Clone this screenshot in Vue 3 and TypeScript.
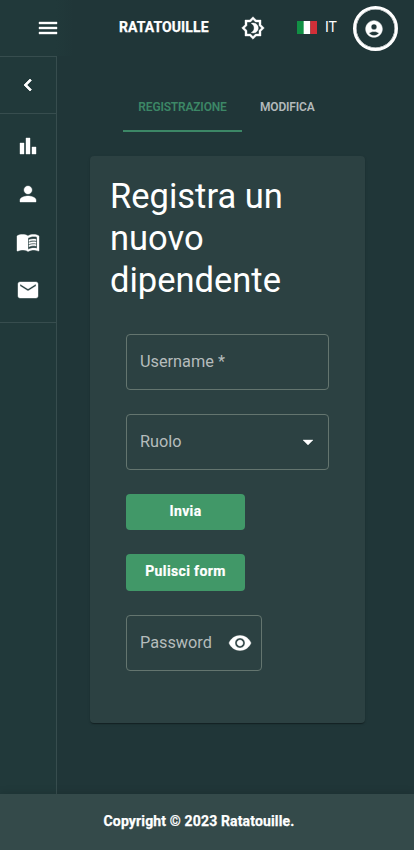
<script setup lang="ts">
import { ref } from 'vue'

interface NavItem {
  name: string
  path: string
}

const navItems: NavItem[] = [
  { name: 'Statistiche', path: 'M4 9h4v11H4zm12 4h4v7h-4zm-6-9h4v16h-4z' },
  { name: 'Utenti', path: 'M12 12c2.21 0 4-1.79 4-4s-1.79-4-4-4-4 1.79-4 4 1.79 4 4 4zm0 2c-2.67 0-8 1.34-8 4v2h16v-2c0-2.66-5.33-4-8-4z' },
  { name: 'Menu', path: 'M21 5c-1.11-.35-2.33-.5-3.5-.5-1.95 0-4.05.4-5.5 1.5-1.45-1.1-3.55-1.5-5.5-1.5S2.45 4.9 1 6v14.65c0 .25.25.5.5.5.1 0 .15-.05.25-.05C3.1 20.45 5.05 20 6.5 20c1.95 0 4.05.4 5.5 1.5 1.35-.85 3.8-1.5 5.5-1.5 1.65 0 3.35.3 4.75 1.05.1.05.15.05.25.05.25 0 .5-.25.5-.5V6c-.6-.45-1.25-.75-2-1zm0 13.5c-1.1-.35-2.3-.5-3.5-.5-1.7 0-4.15.65-5.5 1.5V8c1.35-.85 3.8-1.5 5.5-1.5 1.2 0 2.4.15 3.5.5v11.5zM17.5 10.5c.88 0 1.73.09 2.5.26V9.24c-.79-.15-1.64-.24-2.5-.24-1.7 0-3.24.29-4.5.83v1.66c1.13-.64 2.7-.99 4.5-.99zM13 12.49v1.66c1.13-.64 2.7-.99 4.5-.99.88 0 1.73.09 2.5.26V11.9c-.79-.15-1.64-.24-2.5-.24-1.7 0-3.24.3-4.5.83zM17.5 14.33c-1.7 0-3.24.29-4.5.83v1.66c1.13-.64 2.7-.99 4.5-.99.88 0 1.73.09 2.5.26v-1.52c-.79-.16-1.64-.24-2.5-.24z' },
  { name: 'Messaggi', path: 'M20 4H4c-1.1 0-1.99.9-1.99 2L2 18c0 1.1.9 2 2 2h16c1.1 0 2-.9 2-2V6c0-1.1-.9-2-2-2zm0 4l-8 5-8-5V6l8 5 8-5v2z' },
]

const tabs: string[] = ['Registrazione', 'Modifica']
const activeTab = ref(0)
</script>

<template>
  <div class="page">
    <header class="topbar">
      <button class="plain menu">
        <svg class="icon" viewBox="0 0 24 24"><path d="M3 18h18v-2H3v2zm0-5h18v-2H3v2zm0-7v2h18V6H3z" /></svg>
      </button>
      <span class="brand">RATATOUILLE</span>
      <button class="plain theme">
        <svg class="icon" viewBox="0 0 24 24"><path d="M20 8.69V4h-4.69L12 .69 8.69 4H4v4.69L.69 12 4 15.31V20h4.69L12 23.31 15.31 20H20v-4.69L23.31 12 20 8.69zm-2 5.79V18h-3.52L12 20.48 9.52 18H6v-3.52L3.52 12 6 9.52V6h3.52L12 3.52 14.48 6H18v3.52L20.48 12 18 14.48zM12.29 7c-.74 0-1.45.17-2.08.46 1.72.79 2.92 2.53 2.92 4.54s-1.2 3.75-2.92 4.54c.63.29 1.34.46 2.08.46 2.76 0 5-2.24 5-5s-2.24-5-5-5z" /></svg>
      </button>
      <div class="lang">
        <svg class="flag" viewBox="0 0 20 13"><path fill="#119044" d="M0 0h7v13H0z" /><path fill="#fff" d="M6.67 0h6.66v13H6.67z" /><path fill="#d22f38" d="M13.33 0H20v13h-6.67z" /></svg>
        <span>IT</span>
      </div>
      <button class="plain avatar">
        <svg viewBox="0 0 24 24"><path d="M12 2C6.48 2 2 6.48 2 12s4.48 10 10 10 10-4.48 10-10S17.52 2 12 2zm0 4c1.93 0 3.5 1.57 3.5 3.5S13.93 13 12 13s-3.5-1.57-3.5-3.5S10.07 6 12 6zm0 14c-2.03 0-4.43-.82-6.14-2.88C7.55 15.8 9.68 15 12 15s4.45.8 6.14 2.12C16.43 19.18 14.03 20 12 20z" /></svg>
      </button>
    </header>

    <div class="body">
      <aside class="sidebar">
        <div class="collapse">
          <svg class="icon" viewBox="0 0 24 24"><path d="M15.41 7.41L14 6l-6 6 6 6 1.41-1.41L10.83 12z" /></svg>
        </div>
        <nav class="nav">
          <a v-for="item in navItems" :key="item.name" class="nav-item">
            <svg class="icon" viewBox="0 0 24 24"><path :d="item.path" /></svg>
          </a>
        </nav>
      </aside>

      <main class="content">
        <div class="tabs">
          <button
            v-for="(tab, i) in tabs"
            :key="tab"
            class="plain tab"
            :class="{ active: activeTab === i }"
            @click="activeTab = i"
          >{{ tab }}</button>
        </div>
        <section class="card">
          <h1 class="title">Registra un nuovo dipendente</h1>
          <div class="form">
            <div class="field"><span>Username *</span></div>
            <div class="field">
              <span>Ruolo</span>
              <svg class="icon arrow" viewBox="0 0 24 24"><path d="M7 10l5 5 5-5z" /></svg>
            </div>
            <button class="plain action">Invia</button>
            <button class="plain action clear">Pulisci form</button>
            <div class="field password">
              <span>Password</span>
              <svg class="icon" viewBox="0 0 24 24"><path d="M12 4.5C7 4.5 2.73 7.61 1 12c1.73 4.39 6 7.5 11 7.5s9.27-3.11 11-7.5c-1.73-4.39-6-7.5-11-7.5zM12 17c-2.76 0-5-2.24-5-5s2.24-5 5-5 5 2.24 5 5-2.24 5-5 5zm0-8c-1.66 0-3 1.34-3 3s1.34 3 3 3 3-1.34 3-3-1.34-3-3-3z" /></svg>
            </div>
          </div>
        </section>
      </main>
    </div>

    <footer class="footer">Copyright © 2023 Ratatouille.</footer>
  </div>
</template>

<style>
body {
  margin: 0;
  background: #203638;
}
</style>

<style scoped>
.page,
.page * {
  box-sizing: border-box;
}
.page {
  display: flex;
  flex-direction: column;
  height: 850px;
  background: #203638;
  color: #fff;
  font-family: Roboto, sans-serif;
}
.plain {
  margin: 0;
  padding: 0;
  border: 0;
  background: none;
  color: inherit;
  font: inherit;
  cursor: pointer;
}
svg {
  display: block;
  flex: none;
  fill: currentColor;
}
.icon {
  width: 24px;
  height: 24px;
  stroke: currentColor;
  stroke-width: 0.4px;
}
.topbar {
  display: flex;
  align-items: center;
  height: 56px;
  padding-left: 36px;
  background: linear-gradient(90deg, #21393a 56px, #203638 74px);
}
.brand {
  width: 91px;
  margin-left: 59px;
  margin-top: -2px;
  font-size: 14px;
  font-weight: 700;
  line-height: 20px;
  letter-spacing: 0.1px;
  white-space: nowrap;
  -webkit-text-stroke: 0.25px currentColor;
}
.theme {
  margin-left: 31px;
}
.lang {
  display: flex;
  align-items: center;
  gap: 8px;
  width: 41px;
  margin-left: 32px;
  margin-top: -2px;
  font-size: 14px;
  line-height: 20px;
}
.flag {
  width: 20px;
  height: 13px;
}
.avatar {
  display: flex;
  align-items: center;
  justify-content: center;
  width: 45px;
  height: 45px;
  margin-left: 15px;
  padding: 2px 3px 0 0;
  border: 3px solid #fff;
  border-radius: 50%;
  box-shadow: inset 0 0 0 0.5px #fff;
}
.avatar svg {
  width: 20px;
  height: 20px;
  stroke: currentColor;
  stroke-width: 0.6px;
}
.body {
  display: flex;
  height: 738px;
}
.sidebar {
  width: 57px;
  border-top: 1px solid #374d4e;
  border-right: 1px solid #374d4e;
  background: #21393a;
}
.collapse {
  display: flex;
  align-items: center;
  justify-content: center;
  height: 57px;
  border-bottom: 1px solid #374d4e;
}
.collapse .icon {
  stroke-width: 0.8px;
}
.nav {
  padding: 8px 0;
  border-bottom: 1px solid #374d4e;
}
.nav-item {
  display: flex;
  align-items: center;
  justify-content: center;
  height: 48px;
}
.content {
  flex: 1;
  padding: 28px 49px 0 33px;
}
.tabs {
  display: flex;
  height: 48px;
  margin-left: 33px;
}
.tab {
  padding: 0 18px;
  border-bottom: 2px solid transparent;
  color: #b3babb;
  font-size: 12px;
  font-weight: 600;
  letter-spacing: -0.18px;
  text-transform: uppercase;
}
.tab:first-child {
  width: 119px;
  padding: 0;
}
.tab.active {
  border-color: #3c8766;
  color: #3c8766;
}
.card {
  height: 567px;
  margin-top: 24px;
  padding: 19px 20px 20px;
  border-radius: 4px;
  background: #2c4142;
  box-shadow: 0 2px 1px -1px rgba(0, 0, 0, 0.2), 0 1px 1px rgba(0, 0, 0, 0.14), 0 1px 3px rgba(0, 0, 0, 0.12);
}
.title {
  margin: 0;
  font-size: 34.5px;
  font-weight: 400;
  line-height: 42px;
}
.form {
  display: flex;
  flex-direction: column;
  align-items: flex-start;
  gap: 24px;
  padding: 33px 16px 0;
}
.field {
  display: flex;
  align-items: center;
  justify-content: space-between;
  width: 203px;
  height: 56px;
  padding: 0 8px 0 13px;
  border: 1px solid #64756f;
  border-radius: 4px;
  color: #b5bcbc;
  font-size: 16.3px;
  line-height: 23px;
}
.field span {
  padding-bottom: 2px;
}
.field .icon {
  color: #fff;
}
.password {
  width: 136px;
  padding-right: 9px;
}
.action {
  width: 119px;
  height: 36px;
  padding-bottom: 2px;
  border-radius: 4px;
  background: #419868;
  font-size: 14px;
  font-weight: 700;
  letter-spacing: 0.37px;
  -webkit-text-stroke: 0.2px currentColor;
}
.clear {
  height: 37px;
  padding-bottom: 3px;
}
.footer {
  display: flex;
  align-items: center;
  justify-content: center;
  height: 56px;
  padding: 0 16px 2px 0;
  background: #344a4a;
  box-shadow: 0 -1px 8px rgba(0, 0, 0, 0.12);
  font-size: 14px;
  font-weight: 700;
  letter-spacing: 0.15px;
  -webkit-text-stroke: 0.25px currentColor;
}
</style>
